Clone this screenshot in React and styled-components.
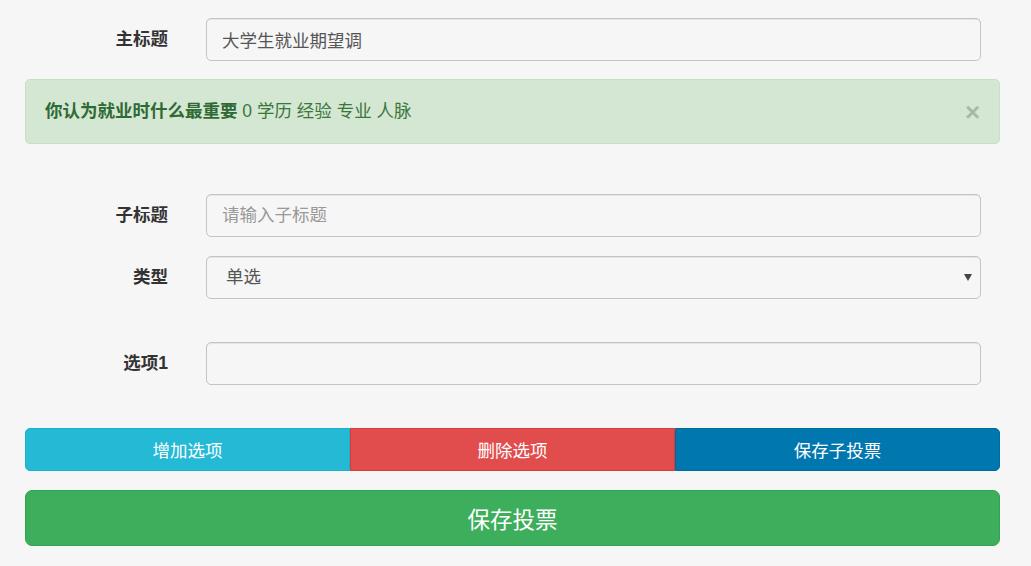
import React from "react";
import styled, { createGlobalStyle } from "styled-components";

const Global = createGlobalStyle`
  html, body { margin: 0; padding: 0; background: #f6f6f6; }
  body {
    font-family: "Liberation Sans", "Noto Sans CJK SC", sans-serif;
    font-size: 17.5px;
    line-height: 1.42857;
    color: #333;
  }
  * { box-sizing: border-box; }
`;

const Page = styled.div`
  padding: 18px 31px 20px 25px;
  width: 1031px;
`;

const FormRow = styled.div`
  display: grid;
  grid-template-columns: 143px 775px;
  column-gap: 38px;
  align-items: center;
  margin-top: ${(p) => p.$mt || 0}px;
`;

const Label = styled.label`
  text-align: right;
  font-weight: bold;
  color: #333;
  font-size: 17.5px;
`;

const Input = styled.input`
  display: block;
  width: 100%;
  height: 42.5px;
  padding: 7.5px 15px;
  font-family: inherit;
  font-size: 17.5px;
  color: #555;
  background: #f6f6f6;
  border: 1px solid #c4c4c4;
  border-radius: 5px;
  box-shadow: inset 0 1px 1px rgba(0, 0, 0, 0.075);
  outline: none;
  &::placeholder { color: #999; }
`;

const SelectWrap = styled.div`
  position: relative;
`;

const Select = styled.select`
  display: block;
  width: 100%;
  height: 42.5px;
  padding: 7.5px 15px 7.5px 19px;
  font-family: inherit;
  font-size: 17.5px;
  color: #555;
  background: #f6f6f6;
  border: 1px solid #c4c4c4;
  border-radius: 5px;
  box-shadow: inset 0 1px 1px rgba(0, 0, 0, 0.075);
  appearance: none;
  -webkit-appearance: none;
  outline: none;
`;

const Arrow = styled.svg`
  position: absolute;
  right: 9px;
  top: 50%;
  margin-top: -3px;
  pointer-events: none;
`;

const Alert = styled.div`
  display: flex;
  align-items: center;
  justify-content: space-between;
  margin-top: 18.5px;
  width: 975px;
  height: 65px;
  padding: 0 18.75px 0 19px;
  background: #d4e7d2;
  border: 1px solid #c6e0c1;
  border-radius: 5px;
  color: #3c763d;
`;

const AlertText = styled.div`
  line-height: 25px;
  strong { font-weight: bold; color: #2f6a35; }
`;

const Close = styled.button`
  border: 0;
  background: transparent;
  padding: 0;
  margin-right: 0;
  font-family: "Liberation Sans", sans-serif;
  font-size: 26px;
  font-weight: bold;
  line-height: 1;
  color: #000;
  opacity: 0.2;
  cursor: pointer;
`;

const BtnGroup = styled.div`
  display: grid;
  grid-template-columns: repeat(3, 1fr);
  width: 975px;
  margin-top: 43.5px;
`;

const tones = {
  info: ["#24b9d5", "#1cb0cc"],
  danger: ["#e14c4d", "#db3a3b"],
  primary: ["#0077ae", "#006a9c"],
  success: ["#3dae5c", "#32a152"],
};

const Btn = styled.button`
  height: 43px;
  font-family: inherit;
  font-size: 17.5px;
  color: #fff;
  background: ${(p) => tones[p.$tone][0]};
  border: 1px solid ${(p) => tones[p.$tone][1]};
  border-radius: 0;
  &:first-child { border-radius: 5px 0 0 5px; }
  &:last-child { border-radius: 0 5px 5px 0; }
  cursor: pointer;
`;

const BigBtn = styled.button`
  display: block;
  width: 975px;
  height: 56px;
  margin-top: 19px;
  font-family: inherit;
  font-size: 22.5px;
  color: #fff;
  background: ${tones.success[0]};
  border: 1px solid ${tones.success[1]};
  border-radius: 7px;
  cursor: pointer;
`;

export default function App() {
  return (
    <>
      <Global />
      <Page>
        <FormRow>
          <Label>主标题</Label>
          <Input defaultValue="大学生就业期望调" />
        </FormRow>
        <Alert>
          <AlertText>
            <strong>你认为就业时什么最重要</strong> 0 学历 经验 专业 人脉
          </AlertText>
          <Close>×</Close>
        </Alert>
        <FormRow $mt={50}>
          <Label>子标题</Label>
          <Input placeholder="请输入子标题" />
        </FormRow>
        <FormRow $mt={19.5}>
          <Label>类型</Label>
          <SelectWrap>
            <Select defaultValue="单选">
              <option>单选</option>
              <option>多选</option>
            </Select>
            <Arrow width="8" height="7" viewBox="0 0 8 7">
              <path d="M0 0 H8 L4 7 Z" fill="#444" />
            </Arrow>
          </SelectWrap>
        </FormRow>
        <FormRow $mt={43.5}>
          <Label>选项1</Label>
          <Input />
        </FormRow>
        <BtnGroup>
          <Btn $tone="info">增加选项</Btn>
          <Btn $tone="danger">删除选项</Btn>
          <Btn $tone="primary">保存子投票</Btn>
        </BtnGroup>
        <BigBtn>保存投票</BigBtn>
      </Page>
    </>
  );
}
